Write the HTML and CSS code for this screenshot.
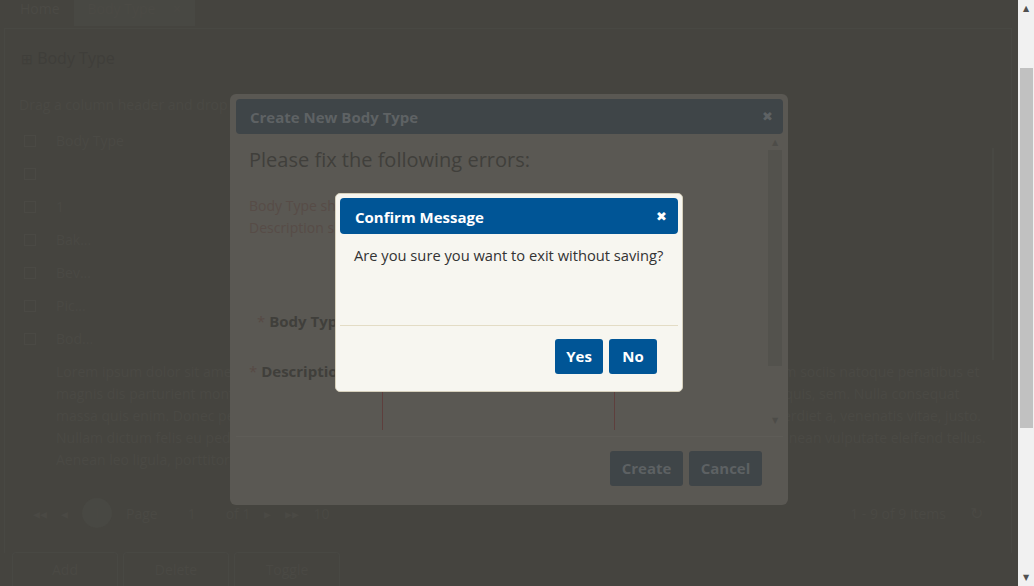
FILE: index.html
```html
<!DOCTYPE html>
<html>
<head>
<meta charset="utf-8">
<link rel="stylesheet" href="styles.css">
</head>
<body>
<div class="screen">
  <div class="viewport">
    <div class="tabs">
      <div class="tab">Home</div>
      <div class="tab tab-active">Body Type <span class="tab-x">×</span></div>
    </div>
    <div class="panel">
      <h2 class="panel-title"><span class="panel-icon">⊞</span> Body Type</h2>
      <div class="group-hint">Drag a column header and drop it here to group by that column</div>
      <div class="grid">
        <div class="grid-main">
          <div class="row"><span class="cb"></span><span class="cell">Body Type</span></div>
          <div class="row"><span class="cb"></span><span class="cell"></span></div>
          <div class="row"><span class="cb"></span><span class="cell">1</span></div>
          <div class="row"><span class="cb"></span><span class="cell">Bak...</span></div>
          <div class="row"><span class="cb"></span><span class="cell">Bev...</span></div>
          <div class="row"><span class="cb"></span><span class="cell">Pic...</span></div>
          <div class="row"><span class="cb"></span><span class="cell">Bod...</span></div>
          <div class="row row-long"><span class="cb"></span><span class="cell cell-long">Lorem ipsum dolor sit amet, consectetuer adipiscing elit. Aenean commodo ligula eget dolor. Aenean massa. Cum sociis natoque penatibus et magnis dis parturient montes, nascetur ridiculus mus. Donec quam felis, ultricies nec, pellentesque eu, pretium quis, sem. Nulla consequat massa quis enim. Donec pede justo, fringilla vel, aliquet nec, vulputate eget, arcu. In enim justo, rhoncus ut, imperdiet a, venenatis vitae, justo. Nullam dictum felis eu pede mollis pretium. Integer tincidunt. Cras dapibus. Vivamus elementum semper nisi. Aenean vulputate eleifend tellus. Aenean leo ligula, porttitor eu, consequat vitae, eleifend ac, enim.</span></div>
        </div>
        <div class="grid-scroll"></div>
      </div>
      <div class="pager">
        <div class="pager-left"><span>◂◂</span><span>◂</span><span class="pg-num">1</span><span>Page</span><span class="pg-box">1</span><span>of 1</span><span>▸</span><span>▸▸</span><span>10</span></div>
        <div class="pager-right"><span>1 - 9 of 9 items</span><span class="refresh">↻</span></div>
      </div>
    </div>
    <div class="actions">
      <div class="act-btn">Add</div>
      <div class="act-btn">Delete</div>
      <div class="act-btn">Toggle</div>
    </div>

    <div class="dialog outer">
      <div class="dlg-head outer-head">
        <span class="dlg-title">Create New Body Type</span>
        <span class="dlg-close">✖</span>
      </div>
      <div class="outer-body">
        <div class="outer-content">
          <div class="err-title">Please fix the following errors:</div>
          <div class="err-list">
            <div>Body Type should not be empty.</div>
            <div>Description should not be empty.</div>
          </div>
          <div class="field field-type"><span class="req">*</span> Body Type</div>
          <div class="field field-desc"><span class="req">*</span> Description</div>
          <div class="textarea"></div>
        </div>
        <div class="outer-scroll">
          <span class="arr">▲</span>
          <div class="outer-thumb"></div>
          <span class="arr arr-down">▼</span>
        </div>
      </div>
      <div class="outer-foot">
        <div class="btn outer-btn">Create</div>
        <div class="btn outer-btn">Cancel</div>
      </div>
    </div>

    <div class="dialog confirm">
      <div class="dlg-head confirm-head">
        <span class="dlg-title">Confirm Message</span>
        <span class="dlg-close">✖</span>
      </div>
      <div class="confirm-body">Are you sure you want to exit without saving?</div>
      <div class="confirm-foot">
        <div class="btn confirm-btn">Yes</div>
        <div class="btn confirm-btn">No</div>
      </div>
    </div>
  </div>
  <div class="scrollbar">
    <span class="sb-arrow">▲</span>
    <div class="sb-track"><div class="sb-thumb"></div></div>
    <span class="sb-arrow">▼</span>
  </div>
</div>
</body>
</html>
```
FILE: styles.css
```css
* { box-sizing: border-box; }
html, body { margin: 0; padding: 0; }
body {
  width: 1034px;
  height: 586px;
  overflow: hidden;
  font-family: "Open Sans", "Liberation Sans", sans-serif;
  font-size: 14px;
  background: #45443f;
}
.screen { display: flex; width: 1034px; height: 586px; }
.viewport {
  position: relative;
  flex: 1;
  background: #45443f;
  color: #4b4a45;
  overflow: hidden;
}

/* page tabs (dimmed behind the modal overlay) */
.tabs { display: flex; height: 26px; padding-left: 14px; }
.tab { padding: 0 14px 0 6px; line-height: 18px; font-size: 14px; color: #4b4a45; }
.tab-active { background: #484843; padding: 0 14px; }
.tab-x { margin-left: 14px; }

.panel {
  margin: 2px 6px 0 4px;
  border: 1px solid #484843;
  border-bottom: none;
  padding: 14px 14px 0 14px;
  height: 525px;
}
.panel-title { margin: 0 0 22px 2px; font-weight: normal; font-size: 16px; line-height: 30px; color: #3f3e3a; }
.panel-icon { font-size: 14px; }
.group-hint { font-size: 14px; line-height: 18px; color: #4a4944; margin-bottom: 10px; }

.grid { display: flex; height: 374px; }
.grid-main { flex: 1; }
.row { display: flex; align-items: center; height: 33px; }
.cb { width: 12px; height: 12px; border: 1px solid #4a4944; margin: 0 20px 0 5px; flex: none; }
.cell { color: #4a4944; font-size: 14px; }
.row-long { height: auto; align-items: flex-start; padding-top: 6px; }
.row-long .cb { visibility: hidden; }
.cell-long { width: 930px; line-height: 22px; height: 110px; overflow: hidden; }
.grid-scroll { width: 12px; margin: 24px 6px 0 6px; height: 212px; border: 1px solid #484843; }

.pager { display: flex; justify-content: space-between; align-items: center; height: 30px; color: #4a4944; }
.pager-left { display: flex; gap: 14px; align-items: center; padding-left: 14px; }
.pg-num { width: 30px; height: 30px; border-radius: 50%; background: #484843; text-align: center; line-height: 30px; }
.pg-box { width: 40px; text-align: center; }
.pager-right { display: flex; gap: 24px; align-items: center; padding-right: 14px; }
.refresh { font-size: 16px; }

.actions { position: absolute; left: 12px; top: 552px; display: flex; gap: 5px; }
.act-btn { width: 106px; height: 34px; border: 1px solid #484843; border-bottom: none; border-radius: 4px 4px 0 0; text-align: center; line-height: 34px; color: #4a4944; }

/* dialogs (overlaid) */
.dialog { position: absolute; border-radius: 6px; display: flex; flex-direction: column; }
.dlg-head { display: flex; justify-content: space-between; align-items: center; border-radius: 4px; font-weight: bold; font-size: 15px; }
.dlg-close { font-family: "DejaVu Sans", sans-serif; font-size: 13px; font-weight: bold; }

.outer { left: 230px; top: 94px; width: 558px; height: 411px; background: #5a5853; padding: 5px 5px 0 6px; }
.outer-head { height: 35px; background: #3f4548; padding: 0 10px 0 14px; }
.outer-head .dlg-title { color: #5e6264; }
.outer-head .dlg-close { color: #5e6264; }
.outer-body { display: flex; height: 303px; border-bottom: 1px solid #5e5c57; }
.outer-content { flex: 1; position: relative; padding: 12px 0 0 13px; }
.err-title { font-size: 20px; line-height: 27px; color: #403f3b; }
.err-list { margin-top: 22px; font-size: 14px; line-height: 22px; color: #574c47; }
.field { position: absolute; font-weight: bold; font-size: 15px; color: #403f3b; }
.req { color: #574a45; font-weight: normal; }
.field-type { left: 21px; top: 177px; }
.field-desc { left: 13px; top: 227px; }
.textarea { position: absolute; left: 146px; top: 258px; width: 233px; height: 38px; border-left: 1px solid #5e3f3d; border-right: 1px solid #5e3f3d; }
.outer-scroll { width: 14px; display: flex; flex-direction: column; align-items: center; margin-right: 1px; padding-top: 4px; }
.arr { font-family: "DejaVu Sans", sans-serif; font-size: 8px; line-height: 10px; color: #4d4c48; }
.outer-thumb { width: 14px; height: 216px; background: #53524d; margin-top: 2px; }
.arr-down { margin-top: 50px; }
.outer-foot { display: flex; justify-content: flex-end; gap: 6px; padding: 14px 21px 0 0; }
.btn { height: 35px; border-radius: 3px; font-weight: bold; font-size: 15px; text-align: center; line-height: 35px; }
.outer-btn { width: 73px; background: #3f4548; color: #5d6163; }

.confirm { left: 335px; top: 193px; width: 348px; height: 199px; background: #f7f6f0; border: 1px solid #d6d0bc; padding: 4px; border-radius: 5px; }
.confirm-head { height: 36px; background: #005596; color: #ffffff; padding: 1px 11px 0 15px; }
.confirm-body { height: 92px; padding: 11px 0 0 14px; color: #333333; font-size: 14.7px; line-height: 20px; border-bottom: 1px solid #e3dcc5; }
.confirm-foot { display: flex; justify-content: flex-end; gap: 6px; padding: 13px 21px 0 0; }
.confirm-btn { background: #005596; color: #ffffff; padding: 0 11px; min-width: 48px; }

/* page scrollbar */
.scrollbar { width: 16px; background: #f1f1f1; display: flex; flex-direction: column; align-items: center; }
.sb-arrow { font-family: "DejaVu Sans", sans-serif; font-size: 8px; line-height: 17px; height: 17px; color: #505050; }
.sb-track { flex: 1; width: 100%; padding: 51px 1px 0 2px; }
.sb-thumb { height: 360px; background: #c1c1c1; width: 13px; }
```
